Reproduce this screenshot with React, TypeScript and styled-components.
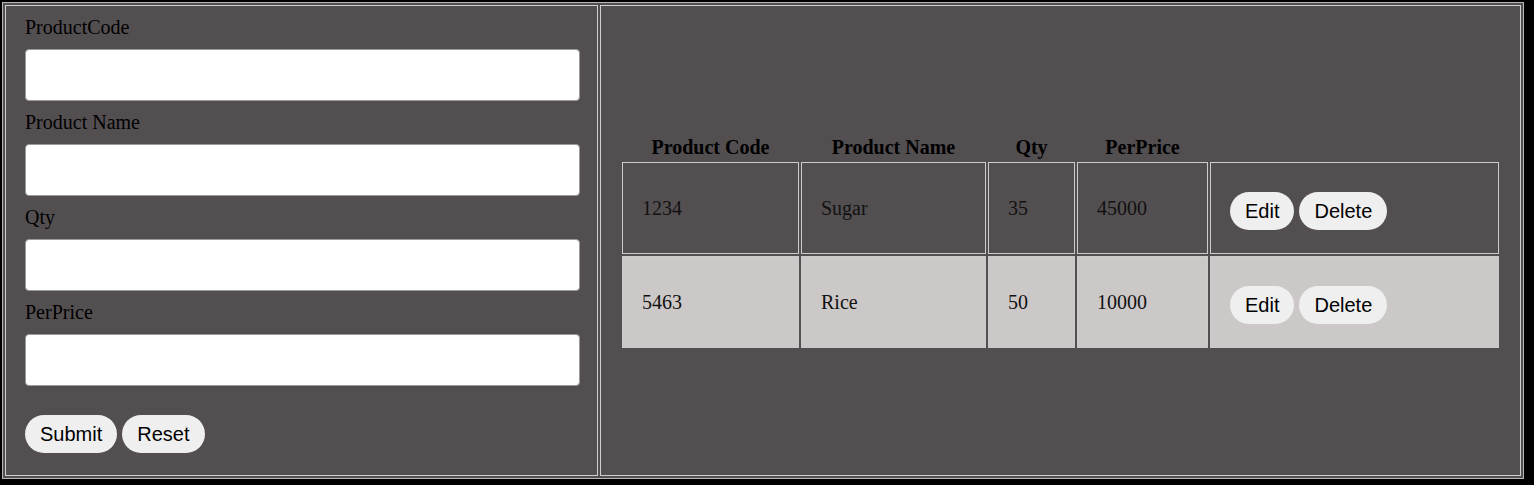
import React from "react";
import styled, { createGlobalStyle } from "styled-components";

const GlobalStyle = createGlobalStyle`
  html, body {
    margin: 0;
    padding: 0;
    background: #000;
  }
  body {
    padding: 2px;
    font-family: "Liberation Serif", "Times New Roman", serif;
    font-size: 20px;
    color: #000;
  }
  * { box-sizing: border-box; }
`;

const Frame = styled.div`
  width: 1522px;
  height: 477px;
  border: 1px solid #b8b8b8;
  padding: 2px;
  display: flex;
  gap: 2px;
  background: #534f51;
`;

const FormPanel = styled.form`
  width: 593px;
  flex: none;
  border: 1px solid #cfcfcf;
  padding: 10px 17px 0 19px;
  display: flex;
  flex-direction: column;
`;

const Label = styled.label`
  display: block;
  line-height: 23px;
  height: 23px;
  margin-bottom: 10px;
`;

const Input = styled.input`
  display: block;
  width: 100%;
  height: 52px;
  margin: 0 0 10px 0;
  border: 1px solid #9a9a9a;
  border-radius: 4px;
  background: #fff;
  font-size: 20px;
  padding: 0 10px;
`;

const ButtonRow = styled.div`
  display: flex;
  gap: 5px;
  margin-top: 19px;
`;

const PillButton = styled.button`
  height: 38px;
  padding: 0 15px;
  border: none;
  border-radius: 19px;
  background: #efefef;
  color: #000;
  font-family: "Liberation Sans", Arial, sans-serif;
  font-size: 20px;
  line-height: 23px;
  cursor: pointer;
`;

const TablePanel = styled.div`
  flex: 1;
  border: 1px solid #cfcfcf;
  padding: 0 19px;
  display: flex;
  align-items: center;
`;

const DataTable = styled.table`
  width: 100%;
  table-layout: fixed;
  border-collapse: separate;
  border-spacing: 2px;
  margin: 1px 0 0 0;
`;

const Th = styled.th<{ $w?: number }>`
  ${(p) => (p.$w ? `width: ${p.$w}px;` : "")}
  box-sizing: border-box;
  padding: 1px 0;
  line-height: 24px;
  font-weight: bold;
  font-size: 20px;
  text-align: center;
  color: #000;
`;

const Tr = styled.tr<{ $alt?: boolean }>`
  background: ${(p) => (p.$alt ? "#ccc8c7" : "transparent")};
`;

const Td = styled.td<{ $actions?: boolean }>`
  height: 92px;
  box-sizing: border-box;
  border: 1px solid #cccccc;
  padding: ${(p) => (p.$actions ? "6px 19px 0" : "0 19px")};
  vertical-align: middle;
  line-height: 23px;
  color: #111;
`;

const Actions = styled.div`
  display: flex;
  gap: 5px;
`;

const rows = [
  { code: "1234", name: "Sugar", qty: "35", price: "45000" },
  { code: "5463", name: "Rice", qty: "50", price: "10000" },
];

export default function App() {
  return (
    <>
      <GlobalStyle />
      <Frame>
        <FormPanel onSubmit={(e) => e.preventDefault()}>
          <Label>ProductCode</Label>
          <Input type="text" />
          <Label>Product Name</Label>
          <Input type="text" />
          <Label>Qty</Label>
          <Input type="text" />
          <Label>PerPrice</Label>
          <Input type="text" />
          <ButtonRow>
            <PillButton type="submit">Submit</PillButton>
            <PillButton type="reset">Reset</PillButton>
          </ButtonRow>
        </FormPanel>
        <TablePanel>
          <DataTable>
            <thead>
              <tr>
                <Th $w={177}>Product Code</Th>
                <Th $w={185}>Product Name</Th>
                <Th $w={87}>Qty</Th>
                <Th $w={131}>PerPrice</Th>
                <Th></Th>
              </tr>
            </thead>
            <tbody>
              {rows.map((r, i) => (
                <Tr key={r.code} $alt={i % 2 === 1}>
                  <Td>{r.code}</Td>
                  <Td>{r.name}</Td>
                  <Td>{r.qty}</Td>
                  <Td>{r.price}</Td>
                  <Td $actions>
                    <Actions>
                      <PillButton type="button">Edit</PillButton>
                      <PillButton type="button">Delete</PillButton>
                    </Actions>
                  </Td>
                </Tr>
              ))}
            </tbody>
          </DataTable>
        </TablePanel>
      </Frame>
    </>
  );
}
